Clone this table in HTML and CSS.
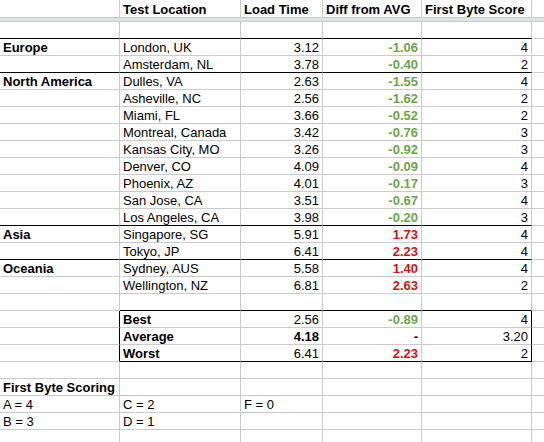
FILE: index.html
```html
<!DOCTYPE html>
<html>
<head>
<meta charset="utf-8">
<link rel="stylesheet" href="styles.css">
</head>
<body>
<div class="sheet">
  <div class="row head"><div></div><div>Test Location</div><div>Load Time</div><div>Diff from AVG</div><div>First Byte Score</div><div></div></div>
  <div class="band"></div>
  <div class="row thick"><div></div><div></div><div></div><div></div><div></div><div class="x"></div></div>

  <div class="row"><div class="b">Europe</div><div>London, UK</div><div class="r">3.12</div><div class="r g">-1.06</div><div class="r">4</div><div></div></div>
  <div class="row thick"><div></div><div>Amsterdam, NL</div><div class="r">3.78</div><div class="r g">-0.40</div><div class="r">2</div><div class="x"></div></div>

  <div class="row"><div class="b">North America</div><div>Dulles, VA</div><div class="r">2.63</div><div class="r g">-1.55</div><div class="r">4</div><div></div></div>
  <div class="row"><div></div><div>Asheville, NC</div><div class="r">2.56</div><div class="r g">-1.62</div><div class="r">2</div><div></div></div>
  <div class="row"><div></div><div>Miami, FL</div><div class="r">3.66</div><div class="r g">-0.52</div><div class="r">2</div><div></div></div>
  <div class="row"><div></div><div>Montreal, Canada</div><div class="r">3.42</div><div class="r g">-0.76</div><div class="r">3</div><div></div></div>
  <div class="row"><div></div><div>Kansas City, MO</div><div class="r">3.26</div><div class="r g">-0.92</div><div class="r">3</div><div></div></div>
  <div class="row"><div></div><div>Denver, CO</div><div class="r">4.09</div><div class="r g">-0.09</div><div class="r">4</div><div></div></div>
  <div class="row"><div></div><div>Phoenix, AZ</div><div class="r">4.01</div><div class="r g">-0.17</div><div class="r">3</div><div></div></div>
  <div class="row"><div></div><div>San Jose, CA</div><div class="r">3.51</div><div class="r g">-0.67</div><div class="r">4</div><div></div></div>
  <div class="row thick"><div></div><div>Los Angeles, CA</div><div class="r">3.98</div><div class="r g">-0.20</div><div class="r">3</div><div class="x"></div></div>

  <div class="row"><div class="b">Asia</div><div>Singapore, SG</div><div class="r">5.91</div><div class="r red">1.73</div><div class="r">4</div><div></div></div>
  <div class="row thick"><div></div><div>Tokyo, JP</div><div class="r">6.41</div><div class="r red">2.23</div><div class="r">4</div><div class="x"></div></div>

  <div class="row"><div class="b">Oceania</div><div>Sydney, AUS</div><div class="r">5.58</div><div class="r red">1.40</div><div class="r">4</div><div></div></div>
  <div class="row"><div></div><div>Wellington, NZ</div><div class="r">6.81</div><div class="r red">2.63</div><div class="r">2</div><div></div></div>

  <div class="row boxtop"><div></div><div></div><div></div><div></div><div></div><div></div></div>
  <div class="row box"><div></div><div class="b">Best</div><div class="r">2.56</div><div class="r g">-0.89</div><div class="r">4</div><div></div></div>
  <div class="row box"><div></div><div class="b">Average</div><div class="r b">4.18</div><div class="r b">-</div><div class="r">3.20</div><div></div></div>
  <div class="row box boxend"><div></div><div class="b">Worst</div><div class="r">6.41</div><div class="r red">2.23</div><div class="r">2</div><div></div></div>

  <div class="row"><div></div><div></div><div></div><div></div><div></div><div></div></div>
  <div class="row"><div class="b">First Byte Scoring</div><div></div><div></div><div></div><div></div><div></div></div>
  <div class="row"><div>A = 4</div><div>C = 2</div><div>F = 0</div><div></div><div></div><div></div></div>
  <div class="row"><div>B = 3</div><div>D = 1</div><div></div><div></div><div></div><div></div></div>
  <div class="row"><div></div><div></div><div></div><div></div><div></div><div></div></div>
</div>
</body>
</html>
```

FILE: styles.css
```css
html, body {
  margin: 0;
  padding: 0;
  background: #ffffff;
  overflow: hidden;
}

.sheet {
  display: grid;
  grid-template-columns: 120px 121px 82px 99px 110px 12px;
  font-family: "Liberation Sans", Arial, sans-serif;
  font-size: 13px;
  color: #000000;
}

.row {
  display: contents;
}

.row > div {
  box-sizing: border-box;
  height: 17px;
  padding: 2px 3px 0 3px;
  line-height: 14px;
  white-space: nowrap;
  overflow: visible;
  border-right: 1px solid #cacaca;
  border-bottom: 1px solid #cacaca;
}

.row > div:nth-child(6) {
  border-right: none;
}

.head > div {
  height: 18px;
  padding-top: 3px;
  font-weight: bold;
}

.band {
  grid-column: 1 / -1;
  height: 4px;
  box-sizing: border-box;
  background: #dde1e9;
  border-bottom: 1px solid #cacaca;
}

.thick > div {
  border-bottom-color: #000000;
}

.thick > div.x {
  border-bottom-color: #cacaca;
}

.boxtop > div:nth-child(n+2):nth-child(-n+5) {
  border-bottom-color: #000000;
}

.box > div:nth-child(1) {
  border-right-color: #000000;
}

.box > div:nth-child(5) {
  border-right-color: #000000;
}

.boxend > div:nth-child(n+2):nth-child(-n+5) {
  border-bottom-color: #000000;
}

.b {
  font-weight: bold;
}

.r {
  text-align: right;
}

.g {
  color: #6aa646;
  font-weight: bold;
}

.red {
  color: #cc1414;
  font-weight: bold;
}
```
